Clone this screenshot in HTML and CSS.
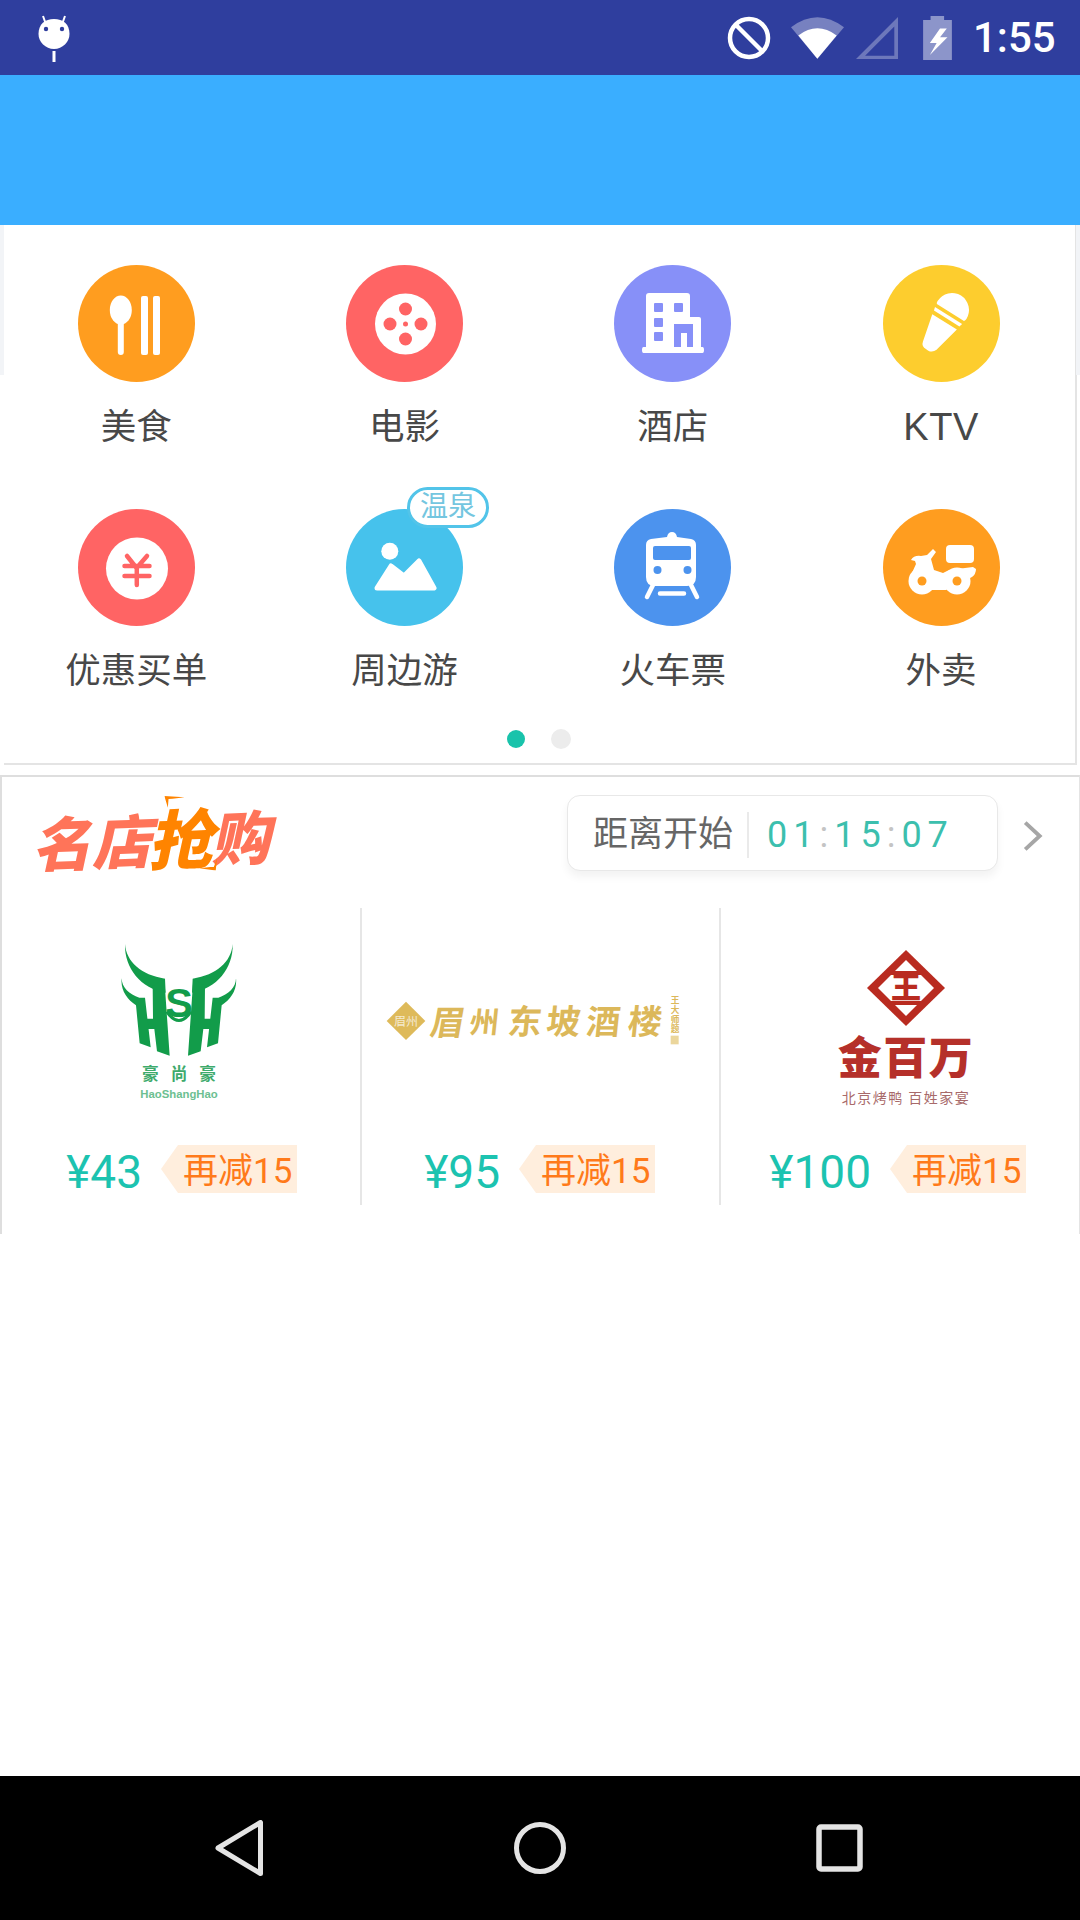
FILE: index.html
```html
<!DOCTYPE html>
<html lang="zh-CN">
<head>
<meta charset="utf-8">
<title>美团</title>
<link rel="stylesheet" href="styles.css">
</head>
<body>
<div class="phone">
  <header class="status">
    <svg class="ic-android" viewBox="0 0 32 47"><path d="M5 1l2.500 7M27 1l-2.500 7" stroke="#fff" stroke-width="2" fill="none"/><path d="M0.500 19C0.500 9 7 4 16 4s15.500 5 15.500 15c0 8-7 15-15.500 15S0.500 27 0.500 19z" fill="#fff"/><circle cx="8" cy="14" r="2.200" fill="#2f3e9e"/><circle cx="24" cy="14" r="2.200" fill="#2f3e9e"/><rect x="14.500" y="36" width="3" height="11" fill="#fff"/></svg>
    <div class="status-right">
      <svg class="ic-block" viewBox="0 0 44 44"><circle cx="22" cy="22" r="19" fill="none" stroke="#fff" stroke-width="4.500"/><path d="M9 9l26 26" stroke="#fff" stroke-width="4.500"/></svg>
      <svg class="ic-wifi" viewBox="0 0 159 125"><path d="M0 30Q79-30 159 30L79 125z" fill="#fff" opacity=".35"/><path d="M22 55Q79 12 137 55L79 125z" fill="#fff"/></svg>
      <svg class="ic-signal" viewBox="0 0 125 125"><path d="M125 0v125H0zM114 28L27 115h87z" fill="#fff" fill-rule="evenodd" opacity=".3"/></svg>
      <svg class="ic-battery" viewBox="0 0 85 130"><path d="M22 0h40v12h23v118H0V12h22z" fill="#fff" opacity=".45"/><path d="M50 37L20 80h20l-20 35 52-52H50l20-26z" fill="#fff"/></svg>
      <span class="clock">1:55</span>
    </div>
  </header>
  <div class="band"></div>
  <main class="content">
    <span class="edge-left"></span>
    <span class="edge-right"></span>
    <section class="menu">
      <div class="menu-grid">
        <a class="item">
          <span class="disc">
            <svg viewBox="0 0 117 117"><circle class="c-food" cx="58.500" cy="58.500" r="58.500"/><ellipse class="w" cx="42.800" cy="45" rx="11" ry="14.500"/><rect class="w" x="39.800" y="50" width="6" height="40" rx="3"/><rect class="w" x="63" y="31" width="7" height="59" rx="2"/><rect class="w" x="75" y="31" width="7" height="59" rx="2"/></svg>
          </span>
          <span class="label">美食</span>
        </a>
        <a class="item">
          <span class="disc">
            <svg viewBox="0 0 117 117"><circle class="c-red" cx="58.500" cy="58.500" r="58.500"/><circle class="w" cx="59.500" cy="59" r="30.500"/><circle class="c-red" cx="59.500" cy="44" r="6.500"/><circle class="c-red" cx="59.500" cy="74" r="6.500"/><circle class="c-red" cx="44" cy="59" r="6.500"/><circle class="c-red" cx="75" cy="59" r="6.500"/><circle class="c-red" cx="59.500" cy="59" r="2.500"/></svg>
          </span>
          <span class="label">电影</span>
        </a>
        <a class="item">
          <span class="disc">
            <svg viewBox="0 0 117 117"><circle class="c-hotel" cx="58.500" cy="58.500" r="58.500"/><path class="w" d="M35 28h38q3 0 3 3v21h9q2 0 2 2v28h1.500q1.500 0 1.500 3t-1.500 3h-59q-1.500 0-1.500-3t1.500-3H32V31q0-3 3-3z"/><g class="c-hotel"><rect x="40" y="38" width="9" height="9" rx="1"/><rect x="60" y="38" width="9" height="9" rx="1"/><rect x="40" y="53" width="9" height="9" rx="1"/><rect x="40" y="67" width="9" height="9" rx="1"/><path d="M60 59h19v23h-6V68h-6v14h-7z"/></g></svg>
          </span>
          <span class="label">酒店</span>
        </a>
        <a class="item">
          <span class="disc">
            <svg viewBox="0 0 117 117"><circle class="c-ktv" cx="58.500" cy="58.500" r="58.500"/><g transform="translate(69 45) rotate(32)"><path class="w" d="M-17 0A17 17 0 0 1 17 0q0 2-1 3H-16q-1-1-1-3z"/><path class="w" d="M-16 6.500h32l-1 3.500h-30z"/><path class="w" d="M-14.500 14h29L8 42q-2 5-7 5h-2q-6 0-7-5z"/></g></svg>
          </span>
          <span class="label label-latin">KTV</span>
        </a>
        <a class="item">
          <span class="disc">
            <svg viewBox="0 0 117 117"><circle class="c-red" cx="58.500" cy="58.500" r="58.500"/><circle class="w" cx="59" cy="59.500" r="31"/><path class="yen" d="M49 47l9.600 12L69 47M46.500 57h25M46.500 67h25M58.800 59v17"/></svg>
          </span>
          <span class="label">优惠买单</span>
        </a>
        <a class="item">
          <span class="disc">
            <svg viewBox="0 0 117 117"><circle class="c-trip" cx="58.500" cy="58.500" r="58.500"/><circle class="w" cx="43.800" cy="42.300" r="8.500"/><path class="w mount" d="M31 79l14-22 13 10 15-15 15 27z"/></svg>
            <span class="badge">温泉</span>
          </span>
          <span class="label">周边游</span>
        </a>
        <a class="item">
          <span class="disc">
            <svg viewBox="0 0 117 117"><circle class="c-train" cx="58.500" cy="58.500" r="58.500"/><path class="w" d="M53 28q1-5 5-5t5 5l14 2q5 1 5 6v32q0 9-9 9H41q-9 0-9-9V36q0-5 5-6z"/><rect class="c-train" x="39" y="37" width="38" height="14" rx="2"/><circle class="c-train" cx="43.500" cy="61" r="4"/><circle class="c-train" cx="73.500" cy="61" r="4"/><path class="rail" d="M39 76l-6 12M77 76l6 12M46 84.500h24"/></svg>
          </span>
          <span class="label">火车票</span>
        </a>
        <a class="item">
          <span class="disc">
            <svg viewBox="0 0 117 117"><circle class="c-food" cx="58.500" cy="58.500" r="58.500"/><rect class="w" x="63" y="36" width="28" height="18" rx="4"/><circle class="w" cx="39" cy="72" r="13.500"/><circle class="w" cx="74" cy="72" r="13.500"/><path class="w" d="M50 40l3 3-5 7 3 11 9 3 6-3 24-3 3 2q0 5-4 8l-6 3-20 10H38L28 66l5-11-1-3-4-1q3-5 10-4l6-1z"/><circle class="c-food" cx="39" cy="72" r="4.500"/><circle class="c-food" cx="74" cy="72" r="4.500"/></svg>
          </span>
          <span class="label">外卖</span>
        </a>
      </div>
      <div class="dots"><i class="dot dot-on"></i><i class="dot"></i></div>
    </section>

    <section class="promo">
      <div class="promo-head">
        <div class="promo-title">
          <span class="pt-a">名店</span><span class="pt-b">抢</span><span class="pt-a">购</span>
          <svg class="pt-mark-top" viewBox="0 0 20 12"><path d="M0 0l20 2-12 1-4 0-1 9z" fill="#ff8400"/></svg>
          <svg class="pt-mark-bot" viewBox="0 0 20 14"><path d="M20 0l-2 14L0 11l12-1 4 0z" fill="#ff8400"/></svg>
        </div>
        <div class="timer">
          <span class="timer-label">距离开始</span>
          <span class="timer-value">01<i>:</i>15<i>:</i>07</span>
        </div>
        <svg class="chevron" viewBox="0 0 18 28"><path d="M2 2l13 12L2 26" fill="none" stroke="#a6a6a6" stroke-width="3.500"/></svg>
      </div>
      <div class="deals">
        <article class="deal">
          <div class="deal-logo">
            <svg class="logo-hsh" viewBox="0 0 480 540">
              <g id="hsh-half" fill="#129c4a">
                <path d="M72 42C76 95 120 135 192 146L194 188C120 176 70 115 72 42z"/>
                <path d="M155 168L190 146L206 377L168 364L160 297H125V266H156z"/>
                <path d="M62 145C62 172 85 194 115 203L132 203L149 352L116 340L105 226C78 208 58 180 62 145z"/>
              </g>
              <use href="#hsh-half" transform="translate(467 0) scale(-1 1)"/>
              <text class="hsh-s" x="234" y="262">S</text>
              <path d="M197 245Q234 298 270 245" fill="none" stroke="#129c4a" stroke-width="9"/>
              <text class="hsh-cn" x="252" y="450">豪尚豪</text>
              <text class="hsh-en" x="234" y="505">HaoShangHao</text>
            </svg>
          </div>
          <div class="deal-foot">
            <span class="price">¥43</span>
            <span class="tag">再减15</span>
          </div>
        </article>
        <article class="deal">
          <div class="deal-logo">
            <svg class="logo-mz" viewBox="0 0 990 210">
              <path d="M90 50l58 58-58 57-58-57z" fill="#deba5a"/>
              <text class="mz-seal" x="90" y="122">眉州</text>
              <g class="mz-name">
                <text transform="translate(158 150) skewX(-10)">眉</text>
                <text class="mz-thin" transform="translate(278 145) skewX(-6)">州</text>
                <text transform="translate(392 147) skewX(-6)">东</text>
                <text transform="translate(508 147) skewX(-6)">坡</text>
                <text transform="translate(628 147) skewX(-6)">酒</text>
                <text transform="translate(752 147) skewX(-6)">楼</text>
              </g>
              <text class="mz-small" x="897" y="55">王</text>
              <text class="mz-small" x="897" y="84">大</text>
              <text class="mz-small" x="897" y="113">师</text>
              <text class="mz-small" x="897" y="142">题</text>
              <rect x="884" y="152" width="24" height="26" fill="#deba5a" opacity=".6"/>
            </svg>
          </div>
          <div class="deal-foot">
            <span class="price">¥95</span>
            <span class="tag">再减15</span>
          </div>
        </article>
        <article class="deal">
          <div class="deal-logo">
            <svg class="logo-jin" viewBox="825 930 150 180">
              <path d="M906 950l39 38-39 38-39-38z" fill="#b92b20"/>
              <path d="M906 960l28 28-28 28-28-28z" fill="#fff"/>
              <path d="M888 971h36v4h-36zM888 1001h36v4h-36z" fill="#b92b20"/>
              <text class="jin-mark" x="906" y="998">王</text>
              <text class="jin-name" x="906" y="1074">金百万</text>
              <text class="jin-sub" x="906" y="1103">北京烤鸭 百姓家宴</text>
            </svg>
          </div>
          <div class="deal-foot">
            <span class="price">¥100</span>
            <span class="tag">再减15</span>
          </div>
        </article>
      </div>
    </section>
  </main>
  <nav class="nav">
    <svg class="ic-back" viewBox="0 0 48 56"><path d="M45.500 2.500v51L3 28z" fill="none" stroke="#e4e4e4" stroke-width="5" stroke-linejoin="round"/></svg>
    <svg class="ic-home" viewBox="0 0 52 52"><circle cx="26" cy="26" r="23.500" fill="none" stroke="#e4e4e4" stroke-width="5"/></svg>
    <svg class="ic-recent" viewBox="0 0 47 48"><rect x="3" y="3" width="41" height="42" rx="2" fill="none" stroke="#e4e4e4" stroke-width="5.500"/></svg>
  </nav>
</div>
</body>
</html>
```

FILE: styles.css
```css
* { box-sizing: border-box; }
html, body { margin: 0; padding: 0; background: #fff; }
body { font-family: Roboto, "Noto Sans CJK SC", sans-serif; }
svg { display: block; }

.phone { width: 1080px; height: 1920px; display: flex; flex-direction: column; overflow: hidden; }

/* status bar */
.status { height: 75px; flex: none; background: #2f3e9e; display: flex; align-items: center; justify-content: space-between; padding: 0 28px 0 38px; }
.ic-android { width: 32px; height: 47px; margin-top: 2px; }
.status-right { display: flex; align-items: center; }
.ic-block { width: 44px; height: 44px; margin-right: 1px; }
.ic-wifi { width: 53px; height: 42px; margin-left: 19px; }
.ic-signal { width: 42px; height: 42px; margin-left: 12px; }
.ic-battery { width: 29px; height: 44px; margin-left: 25px; }
.clock { margin-left: 21px; color: #fff; font-size: 42px; font-weight: 500; line-height: 44px; width: 79px; white-space: nowrap; }

.band { height: 150px; flex: none; background: #3aaeff; }

.content { flex: 1; position: relative; background: #fff; }
.edge-left { position: absolute; left: 0; top: 0; width: 4px; height: 150px; background: #f2f4f7; }
.edge-right { position: absolute; right: 0; top: 0; width: 4px; height: 150px; background: #f2f4f7; }

/* category menu */
.menu { height: 540px; margin: 0 3px 0 4px; border-bottom: 2px solid #e4e4e4; border-right: 2px solid #e4e4e4; }
.menu-grid { display: grid; grid-template-columns: repeat(4, 268.3px); grid-auto-rows: 244.4px; margin-left: -2px; }
.item { display: flex; flex-direction: column; align-items: center; padding-top: 40px; }
.disc { position: relative; width: 117px; height: 117px; display: block; }
.disc svg { width: 117px; height: 117px; }
.label { margin-top: 23px; height: 44px; font-size: 35.5px; line-height: 44px; color: #484848; white-space: nowrap; }
.label-latin { font-family: "Liberation Sans", sans-serif; font-size: 38px; letter-spacing: 0.5px; }
.badge { position: absolute; left: 61px; top: -22px; width: 82px; height: 41px; background: #fff; border: 3px solid #52c4e9; border-radius: 21px; color: #74c6e0; font-size: 28px; line-height: 34px; text-align: center; white-space: nowrap; }

.w { fill: #fff; }
.c-food { fill: #ff9d1f; }
.c-red { fill: #ff6464; }
.c-hotel { fill: #8790f8; }
.c-ktv { fill: #fdcd2e; }
.c-trip { fill: #46c2ec; }
.c-train { fill: #4c93ee; }
.yen { fill: none; stroke: #ff6464; stroke-width: 4.500; stroke-linecap: round; stroke-linejoin: round; }
.mount { stroke: #fff; stroke-width: 5; stroke-linejoin: round; }
.rail { fill: none; stroke: #fff; stroke-width: 4.500; stroke-linecap: round; }

.dots { display: flex; justify-content: center; align-items: center; gap: 26px; margin: 15px 0 0 -2px; }
.dot { width: 20px; height: 20px; border-radius: 50%; background: #ececec; }
.dot-on { width: 18px; height: 18px; background: #19c3ab; }

/* promo */
.promo { height: 459px; margin-top: 10px; border-top: 2px solid #dedede; border-left: 2px solid #dedede; border-right: 1px solid #e4e4e4; }
.promo-head { height: 131px; display: flex; align-items: flex-start; padding: 18px 0 0 37px; position: relative; }
.promo-title { position: relative; display: flex; align-items: center; width: 236px; height: 75px; margin-top: 5px; font-size: 59px; line-height: 75px; font-weight: 900; transform: skewX(-14deg) rotate(-2deg); font-family: "Noto Sans CJK SC", sans-serif; white-space: nowrap; }
.pt-a { color: #ff7459; }
.pt-b { color: #ff8400; font-size: 65px; margin: 0 -3px; }
.pt-mark-top { position: absolute; left: 118px; top: -4px; width: 20px; height: 12px; transform: skewX(14deg); }
.pt-mark-bot { position: absolute; left: 166px; top: 60px; width: 18px; height: 13px; transform: skewX(14deg); }

.timer { margin-left: 292px; width: 431px; height: 76px; display: flex; align-items: center; background: #fff; border: 1px solid #e8e8e8; border-radius: 13px; box-shadow: 0 6px 8px rgba(0, 0, 0, 0.05); padding: 4px 0 0 25px; }
.timer-label { font-size: 35px; line-height: 46px; color: #666; padding-right: 14px; border-right: 2px solid #eaeaea; white-space: nowrap; }
.timer-value { margin-left: 18px; font-size: 36px; line-height: 46px; letter-spacing: 6px; color: #3cbfae; white-space: nowrap; font-weight: 400; }
.timer-value i { font-style: normal; color: #c4c4c4; }
.chevron { position: absolute; left: 1021px; top: 43px; width: 20px; height: 32px; }

.deals { display: grid; grid-template-columns: 358px 359px 1fr; height: 297px; }
.deal { display: flex; flex-direction: column; }
.deal + .deal { border-left: 2px solid #e6e6e6; }
.deal-logo { height: 237px; padding-bottom: 13px; display: flex; align-items: center; justify-content: center; }
.logo-hsh { width: 160px; height: 180px; }
.logo-mz { width: 330px; height: 70px; }
.logo-jin { width: 150px; height: 180px; }
.deal-foot { height: 48px; display: flex; align-items: center; justify-content: flex-end; padding-right: 63px; gap: 19px; }
.deal + .deal .deal-foot { padding-right: 64px; }
.deal:last-child .deal-foot { padding-right: 53px; }
.price { font-size: 46px; line-height: 54px; height: 48px; color: #1cc3b0; white-space: nowrap; font-weight: 400; }
.tag { position: relative; width: 136px; height: 48px; padding-left: 22px; background: #ffeedd; color: #ff7a1a; font-size: 35px; line-height: 54px; white-space: nowrap; clip-path: polygon(17px 0, 100% 0, 100% 100%, 17px 100%, 0 50%); }

/* logo text */
.hsh-s { font-family: "Liberation Sans", sans-serif; font-size: 124px; font-weight: 700; fill: #129c4a; text-anchor: middle; }
.hsh-cn { font-family: "Noto Sans CJK SC", sans-serif; font-size: 50px; font-weight: 700; letter-spacing: 36px; fill: #3eaa6c; text-anchor: middle; }
.hsh-en { font-family: "Liberation Sans", sans-serif; font-size: 34px; font-weight: 700; fill: #6cc091; text-anchor: middle; }
.mz-seal { font-family: "Noto Sans CJK SC", sans-serif; font-size: 36px; fill: #fff; opacity: 0.7; text-anchor: middle; }
.mz-name text { font-family: "Noto Sans CJK SC", sans-serif; font-size: 102px; font-weight: 700; fill: #dcb85a; }
.mz-name .mz-thin { font-size: 88px; }
.mz-small { font-family: "Noto Sans CJK SC", sans-serif; font-size: 26px; font-weight: 700; fill: #dcb85a; text-anchor: middle; }
.jin-mark { font-family: "Noto Sans CJK SC", sans-serif; font-size: 30px; font-weight: 900; fill: #b92b20; text-anchor: middle; }
.jin-name { font-family: "Noto Sans CJK SC", sans-serif; font-size: 44px; font-weight: 900; letter-spacing: 1.5px; fill: #b5302a; text-anchor: middle; }
.jin-sub { font-family: "Noto Sans CJK SC", sans-serif; font-size: 14px; letter-spacing: 1.5px; fill: #a86a6a; text-anchor: middle; }

/* nav bar */
.nav { height: 144px; flex: none; background: #000; display: flex; align-items: center; justify-content: space-between; padding: 0 217px 0 215px; }
.ic-back { width: 48px; height: 56px; }
.ic-home { width: 52px; height: 52px; }
.ic-recent { width: 47px; height: 48px; }
```
